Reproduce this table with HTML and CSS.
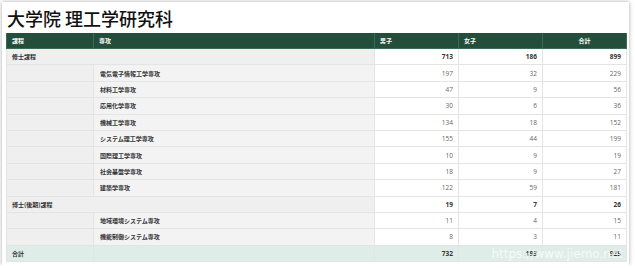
FILE: index.html
```html
<!DOCTYPE html>
<html lang="ja">
<head>
<meta charset="utf-8">
<link rel="stylesheet" href="styles.css">
</head>
<body>
<div class="card">
  <h1 class="title">大学院 理工学研究科</h1>
  <table class="stats">
    <colgroup>
      <col class="c1"><col class="c2"><col class="c3"><col class="c4"><col class="c5">
    </colgroup>
    <thead>
      <tr>
        <th>課程</th><th>専攻</th><th>男子</th><th>女子</th><th class="center">合計</th>
      </tr>
    </thead>
    <tbody>
      <tr class="cat"><td colspan="2" class="lab">修士課程</td><td class="num b">713</td><td class="num b">186</td><td class="num b">899</td></tr>
      <tr><td class="blank"></td><td class="lab major">電気電子情報工学専攻</td><td class="num">197</td><td class="num">32</td><td class="num">229</td></tr>
      <tr><td class="blank"></td><td class="lab major">材料工学専攻</td><td class="num">47</td><td class="num">9</td><td class="num">56</td></tr>
      <tr><td class="blank"></td><td class="lab major">応用化学専攻</td><td class="num">30</td><td class="num">6</td><td class="num">36</td></tr>
      <tr><td class="blank"></td><td class="lab major">機械工学専攻</td><td class="num">134</td><td class="num">18</td><td class="num">152</td></tr>
      <tr><td class="blank"></td><td class="lab major">システム理工学専攻</td><td class="num">155</td><td class="num">44</td><td class="num">199</td></tr>
      <tr><td class="blank"></td><td class="lab major">国際理工学専攻</td><td class="num">10</td><td class="num">9</td><td class="num">19</td></tr>
      <tr><td class="blank"></td><td class="lab major">社会基盤学専攻</td><td class="num">18</td><td class="num">9</td><td class="num">27</td></tr>
      <tr><td class="blank"></td><td class="lab major">建築学専攻</td><td class="num">122</td><td class="num">59</td><td class="num">181</td></tr>
      <tr class="cat"><td colspan="2" class="lab">博士(後期)課程</td><td class="num b">19</td><td class="num b">7</td><td class="num b">26</td></tr>
      <tr><td class="blank"></td><td class="lab major">地域環境システム専攻</td><td class="num">11</td><td class="num">4</td><td class="num">15</td></tr>
      <tr><td class="blank"></td><td class="lab major">機能制御システム専攻</td><td class="num">8</td><td class="num">3</td><td class="num">11</td></tr>
      <tr class="total"><td class="lab">合計</td><td></td><td class="num b">732</td><td class="num b">193</td><td class="num b">925</td></tr>
    </tbody>
  </table>
  <div class="watermark">https://www.jiemo.net</div>
</div>
</body>
</html>
```
FILE: styles.css
```css
html, body {
  margin: 0;
  padding: 0;
  background: #ffffff;
}
body {
  font-family: "Noto Sans CJK JP", "Noto Sans", sans-serif;
  color: #333;
}
.card {
  position: relative;
  margin: 2px 6px 0 2px;
  padding: 4px 4px 3px 4px;
  background: #fff;
  box-shadow: 0 0 4px rgba(0, 0, 0, 0.35);
}
.title {
  margin: 0 0 3px 1px;
  font-size: 18px;
  line-height: 24px;
  font-weight: 500;
  color: #111;
}
.stats {
  border-collapse: collapse;
  width: 620px;
  table-layout: fixed;
}
.c1 { width: 87px; }
.c2 { width: 281px; }
.c3 { width: 84px; }
.c4 { width: 84px; }
.c5 { width: 84px; }
.stats th {
  background: #244e3b;
  color: #fff;
  font-size: 6px;
  font-weight: 700;
  text-align: left;
  height: 15px;
  padding: 0 5px;
  border: 1px solid #3c6a55;
  border-top: 0;
}
.stats th.center { text-align: center; }
.stats td {
  height: 15.4px;
  padding: 0 5px;
  border: 1px solid #e4e4e4;
  font-size: 6px;
  background: #fff;
}
.stats td.lab {
  font-weight: 700;
  color: #333;
  background: #efefef;
}
.stats td.major { padding-left: 6px; background: #f3f3f3; }
.stats td.blank { background: #efefef; }
.stats td.num {
  text-align: right;
  font-family: "Open Sans", "Noto Sans", sans-serif;
  font-size: 6.5px;
  color: #666;
  padding-right: 5px;
}
.stats td.b { font-weight: 700; color: #333; }
.stats tr.total td { background: #deede8; }
.watermark {
  position: absolute;
  right: 6px;
  bottom: 4px;
  font-family: "DejaVu Sans", sans-serif;
  font-size: 12px;
  color: rgba(255, 255, 255, 0.75);
}
```
